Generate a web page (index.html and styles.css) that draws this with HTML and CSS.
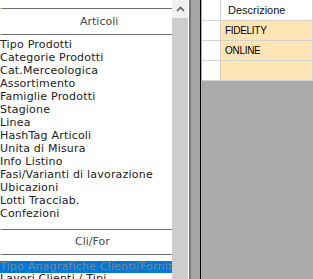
FILE: index.html
```html
<!DOCTYPE html>
<html lang="it">
<head>
    <meta charset="UTF-8">
    <title>Tabelle</title>
    <link rel="stylesheet" href="styles.css">
</head>
<body>
    <div class="screen">
        <div class="menu">
            <div class="menu-list">
                <div class="section">
                    <div class="rule"></div>
                    <div class="section-title articoli">Articoli</div>
                    <div class="rule"></div>
                    <ul class="items">
                        <li>Tipo Prodotti</li>
                        <li>Categorie Prodotti</li>
                        <li>Cat.Merceologica</li>
                        <li>Assortimento</li>
                        <li>Famiglie Prodotti</li>
                        <li>Stagione</li>
                        <li>Linea</li>
                        <li>HashTag Articoli</li>
                        <li>Unita di Misura</li>
                        <li>Info Listino</li>
                        <li>Fasi/Varianti di lavorazione</li>
                        <li>Ubicazioni</li>
                        <li>Lotti Tracciab.</li>
                        <li>Confezioni</li>
                    </ul>
                </div>
                <div class="section section-second">
                    <div class="rule"></div>
                    <div class="section-title clifor">Cli/For</div>
                    <div class="rule"></div>
                    <ul class="items items-tight">
                        <li class="selected">Tipo Anagrafiche Clienti/Fornitori</li>
                        <li>Lavori Clienti / Tipi</li>
                    </ul>
                </div>
            </div>
            <div class="scrollbar">
                <div class="scroll-btn">
                    <svg width="9" height="6" viewBox="0 0 9 6">
                        <path d="M1 5 L4.5 1.5 L8 5" fill="none" stroke="#606060" stroke-width="1.6"/>
                    </svg>
                </div>
                <div class="scroll-thumb"></div>
            </div>
        </div>

        <div class="splitter">
            <div class="split-light"></div>
            <div class="split-dark"></div>
            <div class="split-mid"></div>
            <div class="split-black"></div>
        </div>

        <div class="workspace">
            <table class="grid">
                <tr class="grid-head">
                    <td class="rowhead"></td>
                    <td class="colhead">Descrizione</td>
                </tr>
                <tr>
                    <td class="rowhead"></td>
                    <td class="cell">FIDELITY</td>
                </tr>
                <tr>
                    <td class="rowhead"></td>
                    <td class="cell">ONLINE</td>
                </tr>
                <tr>
                    <td class="rowhead"></td>
                    <td class="cell"></td>
                </tr>
            </table>
        </div>
    </div>
</body>
</html>
```

FILE: styles.css
```css
html, body {
    margin: 0;
    padding: 0;
}

body {
    font-family: "DejaVu Sans", Verdana, sans-serif;
    font-size: 11px;
    background-color: #ababab;
}

.screen {
    display: flex;
    width: 313px;
    height: 279px;
    overflow: hidden;
}

/* pannello menu a sinistra */
.menu {
    display: flex;
    flex: none;
    width: 188px;
    height: 279px;
    background-color: #fff;
}

.menu-list {
    width: 172px;
    height: 279px;
    overflow: hidden;
    padding-top: 8px;
    box-sizing: border-box;
}

.rule {
    height: 1px;
    background: linear-gradient(to right, #c9a47a 0, #c9a47a 2px, #6e6e6e 2px);
}

.section-title {
    height: 25px;
    line-height: 25px;
    color: #4a4a4a;
    white-space: nowrap;
}

.articoli {
    padding-left: 80px;
}

.clifor {
    height: 24px;
    line-height: 24px;
    padding-left: 75px;
}

.items {
    list-style: none;
    margin: 3px 0 0 0;
    padding: 0;
}

.items li {
    line-height: 13px;
    height: 13px;
    color: #222;
    white-space: nowrap;
    overflow: hidden;
    letter-spacing: 0.2px;
}

.section-second {
    margin-top: 9px;
}

.items-tight {
    margin-top: 6px;
}

.items-tight li {
    line-height: 12px;
    height: 12px;
}

.items li.selected {
    background-color: #0078d7;
    color: #7b8594;
}

.scrollbar {
    width: 16px;
    display: flex;
    flex-direction: column;
}

.scroll-btn {
    height: 18px;
    background-color: #f0f0f0;
    display: flex;
    align-items: center;
    justify-content: center;
}

.scroll-thumb {
    flex: 1;
    background-color: #cdcdcd;
}

/* divisore */
.splitter {
    display: flex;
    flex: none;
    height: 279px;
}

.split-light {
    width: 1px;
    background-color: #fff;
}

.split-dark {
    width: 2px;
    background-color: #76767e;
}

.split-mid {
    width: 9px;
    background-color: #a6a6a6;
}

.split-black {
    width: 1px;
    background-color: #000;
}

/* griglia */
.workspace {
    flex: 1;
    padding-left: 1px;
}

.grid {
    border-collapse: separate;
    border-spacing: 0;
    font-family: "Liberation Sans", Arial, sans-serif;
}

.grid td {
    padding: 0;
    height: 19px;
    border-right: 1px solid #d2d2d2;
    border-bottom: 1px solid #d2d2d2;
}

.grid-head td {
    height: 20px;
}

.rowhead {
    width: 18px;
    background-color: #fff;
}

.colhead {
    width: 84px;
    padding-left: 7px !important;
    background-color: #fff;
    font-size: 11px;
    color: #111;
}

.cell {
    width: 87px;
    padding-left: 4px !important;
    background-color: #ffe4b5;
    font-size: 10px;
    letter-spacing: -0.3px;
    color: #000;
}
```
